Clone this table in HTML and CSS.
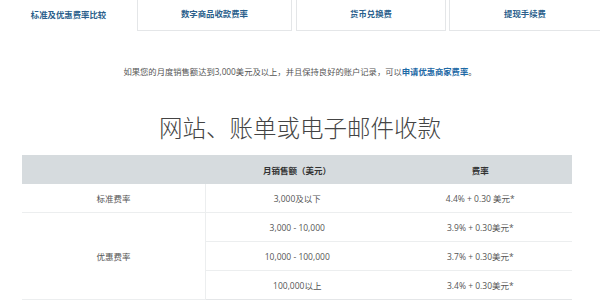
FILE: index.html
```html
<!DOCTYPE html>
<html lang="zh-CN">
<head>
<meta charset="utf-8">
<link rel="stylesheet" href="styles.css">
</head>
<body>
<nav class="tabs">
  <div class="tab active">标准及优惠费率比较</div>
  <div class="tab t2">数字商品收款费率</div>
  <div class="tab t3">货币兑换费</div>
  <div class="tab t4">提现手续费</div>
</nav>
<p class="intro">如果您的月度销售额达到3,000美元及以上，并且保持良好的账户记录，可以<a class="link">申请优惠商家费率</a>。</p>
<h1 class="title">网站、账单或电子邮件收款</h1>
<table class="rates">
  <thead>
    <tr><th></th><th>月销售额（美元）</th><th>费率</th></tr>
  </thead>
  <tbody>
    <tr class="full"><td class="type">标准费率</td><td>3,000及以下</td><td>4.4% + 0.30 美元*</td></tr>
    <tr class="full"><td class="type" rowspan="3">优惠费率</td><td>3,000 - 10,000</td><td>3.9% + 0.30美元*</td></tr>
    <tr><td>10,000 - 100,000</td><td>3.7% + 0.30美元*</td></tr>
    <tr class="last"><td>100,000以上</td><td>3.4% + 0.30美元*</td></tr>
  </tbody>
</table>
</body>
</html>
```

FILE: styles.css
```css
html, body {
  margin: 0;
  padding: 0;
  background: #ffffff;
}
body {
  width: 600px;
  height: 305px;
  overflow: hidden;
  font-family: "Open Sans", "Noto Sans CJK SC", sans-serif;
  color: #555;
}
.tabs {
  display: flex;
  height: 31px;
}
.tab {
  box-sizing: border-box;
  height: 31px;
  display: flex;
  align-items: center;
  justify-content: center;
  font-size: 8.4px;
  font-weight: 700;
  color: #2b5f8c;
  border: 1px solid #e4e6e8;
  border-top: none;
  padding-bottom: 4px;
}
.tab.active {
  width: 137px;
  border: none;
}
.tab.t2 { width: 155px; }
.tab.t3 { width: 150px; margin-left: 4px; }
.tab.t4 { flex: 1; margin-left: 3px; border-right: none; }
.intro {
  margin: 35px 0 0;
  text-align: center;
  font-size: 8.3px;
  line-height: 12px;
  color: #555;
}
.link {
  color: #1e6aa6;
  font-weight: 700;
}
.title {
  margin: 34px 0 0;
  text-align: center;
  font-size: 23.5px;
  line-height: 30px;
  font-weight: 300;
  color: #444;
  font-family: "Noto Sans CJK SC", sans-serif;
}
.rates {
  margin: 13px 0 0 22px;
  width: 550px;
  border-collapse: collapse;
  table-layout: fixed;
  font-size: 8.5px;
}
.rates th {
  background: #d6dbde;
  height: 29px;
  padding: 0;
  font-weight: 700;
  color: #333;
  text-align: center;
}
.rates td {
  height: 28px;
  padding: 0;
  text-align: center;
  color: #555;
  border-bottom: 1px solid #eceeef;
}
.rates td.type {
  border-right: 1px solid #eceeef;
}
.rates tr.last td {
  border-bottom: 1px solid #e4e6e8;
}
```
